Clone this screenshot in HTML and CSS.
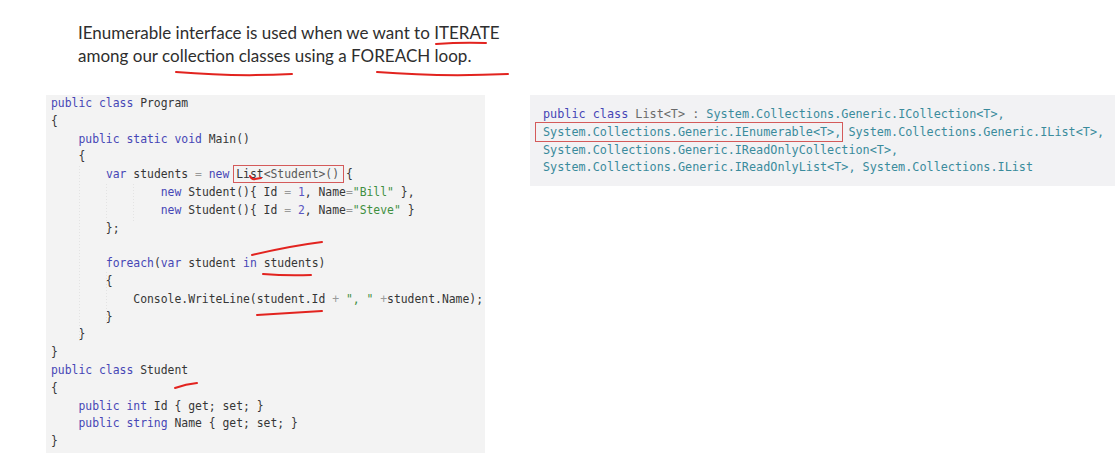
FILE: index.html
```html
<!DOCTYPE html>
<html lang="en">
<head>
    <meta charset="UTF-8">
    <meta name="viewport" content="width=device-width, initial-scale=1.0">
    <title>IEnumerable interface</title>
    <link rel="stylesheet" href="styles.css">
</head>
<body>
    <div class="slide">
        <!-- Titulo de la diapositiva -->
        <div class="titulo">
            <p>IEnumerable interface is used when we want to ITERATE</p>
            <p>among our collection classes using a FOREACH loop.</p>
        </div>

        <div class="fila">
            <!-- Ejemplo de codigo -->
            <div class="codigo">
                <div class="ln"><span class="kw">public class</span> Program</div>
                <div class="ln">{</div>
                <div class="ln">    <span class="kw">public static void</span> Main()</div>
                <div class="ln">    {</div>
                <div class="ln">        <span class="kw">var</span> students <span class="op">=</span> <span class="kw">new</span> <span class="caja">List<span class="gen">&lt;Student&gt;()</span></span> {</div>
                <div class="ln">                <span class="kw">new</span> Student(){ Id <span class="op">=</span> <span class="num">1</span>, Name<span class="op">=</span><span class="str">"Bill"</span> },</div>
                <div class="ln">                <span class="kw">new</span> Student(){ Id <span class="op">=</span> <span class="num">2</span>, Name<span class="op">=</span><span class="str">"Steve"</span> }</div>
                <div class="ln">        };</div>
                <div class="ln"></div>
                <div class="ln">        <span class="kw">foreach</span>(<span class="kw">var</span> student <span class="kw">in</span> students)</div>
                <div class="ln">        {</div>
                <div class="ln">            Console.WriteLine(student.Id <span class="op">+</span> <span class="str">", "</span> <span class="op">+</span>student.Name);</div>
                <div class="ln">        }</div>
                <div class="ln">    }</div>
                <div class="ln">}</div>
                <div class="ln"><span class="kw">public class</span> Student</div>
                <div class="ln">{</div>
                <div class="ln">    <span class="kw">public int</span> Id { get; set; }</div>
                <div class="ln">    <span class="kw">public string</span> Name { get; set; }</div>
                <div class="ln">}</div>
            </div>

            <!-- Declaracion de List<T> -->
            <div class="declaracion">
                <div class="ln"><span class="kw">public class</span> <span class="gris">List&lt;T&gt; :</span> System.Collections.Generic.ICollection&lt;T&gt;,</div>
                <div class="ln"><span class="marco">System.Collections.Generic.IEnumerable&lt;T&gt;,</span> System.Collections.Generic.IList&lt;T&gt;,</div>
                <div class="ln">System.Collections.Generic.IReadOnlyCollection&lt;T&gt;,</div>
                <div class="ln">System.Collections.Generic.IReadOnlyList&lt;T&gt;, System.Collections.IList</div>
            </div>
        </div>

        <!-- Marcas a mano alzada -->
        <svg class="marcas" width="1115" height="471" viewBox="0 0 1115 471">
            <g class="guias">
                <line x1="79.5" y1="166" x2="79.5" y2="343"/>
                <line x1="106.5" y1="184" x2="106.5" y2="222"/>
                <line x1="133.5" y1="184" x2="133.5" y2="222"/>
                <line x1="106.5" y1="272" x2="106.5" y2="325"/>
            </g>
            <g class="trazos">
                <path d="M436 44 Q462 42 486 43"/>
                <path d="M176 72 Q236 77 292 74"/>
                <path d="M377 72 Q440 77 508 74"/>
                <path d="M250 176 Q252 180 255 179 L261 178"/>
                <path d="M252 255 Q290 246 322 242"/>
                <path d="M263 274 Q287 276 311 275"/>
                <path d="M257 315 Q290 313 322 311"/>
                <path d="M175 388 Q186 384 197 383"/>
            </g>
        </svg>
    </div>
</body>
</html>
```

FILE: styles.css
```css
body {
    margin: 0;
    background-color: white;
    font-family: Lato, "Open Sans", sans-serif;
}
.slide {
    position: relative;
    width: 1115px;
    height: 471px;
    overflow: hidden;
}
.titulo {
    padding: 21px 0 0 78px;
    font-size: 17px;
    line-height: 23px;
    color: #2e2e2e;
}
.titulo p {
    margin: 0;
}
.fila {
    display: flex;
    align-items: flex-start;
    margin-top: 28px;
}
.codigo,
.declaracion {
    font-family: "DejaVu Sans Mono", "Liberation Mono", monospace;
    line-height: 17.8px;
}
.ln {
    white-space: pre;
    height: 17.8px;
}
.codigo {
    margin-left: 46px;
    width: 429px;
    padding: 0 5px 2px 5px;
    font-size: 11.4px;
    color: #363636;
    background-color: #f3f3f3;
}
.declaracion {
    flex: 1;
    margin-left: 45px;
    padding: 11px 0 9px 13px;
    font-size: 11.8px;
    color: #3a8b9c;
    background-color: #f2f2f4;
}
.kw {
    color: #4646b6;
}
.num {
    color: #5a55c2;
}
.str {
    color: #3f8f3f;
}
.op {
    color: #9a9a9a;
}
.gen {
    color: #5a5a5a;
}
.gris {
    color: #6a6a6a;
}
.caja,
.marco {
    position: relative;
}
.caja::after {
    content: "";
    position: absolute;
    left: -3px;
    right: -5px;
    top: -2px;
    bottom: -2px;
    border: 1px solid #d45a5a;
}
.marco::after {
    content: "";
    position: absolute;
    left: -8px;
    right: -2px;
    top: -3px;
    bottom: -3px;
    border: 1px solid #d45a5a;
}
.marcas {
    position: absolute;
    top: 0;
    left: 0;
    pointer-events: none;
}
.guias line {
    stroke: #e3e3e3;
    stroke-width: 1;
    stroke-dasharray: 1 2;
}
.trazos path {
    fill: none;
    stroke: #e2231f;
    stroke-width: 2;
    stroke-linecap: round;
}
```
